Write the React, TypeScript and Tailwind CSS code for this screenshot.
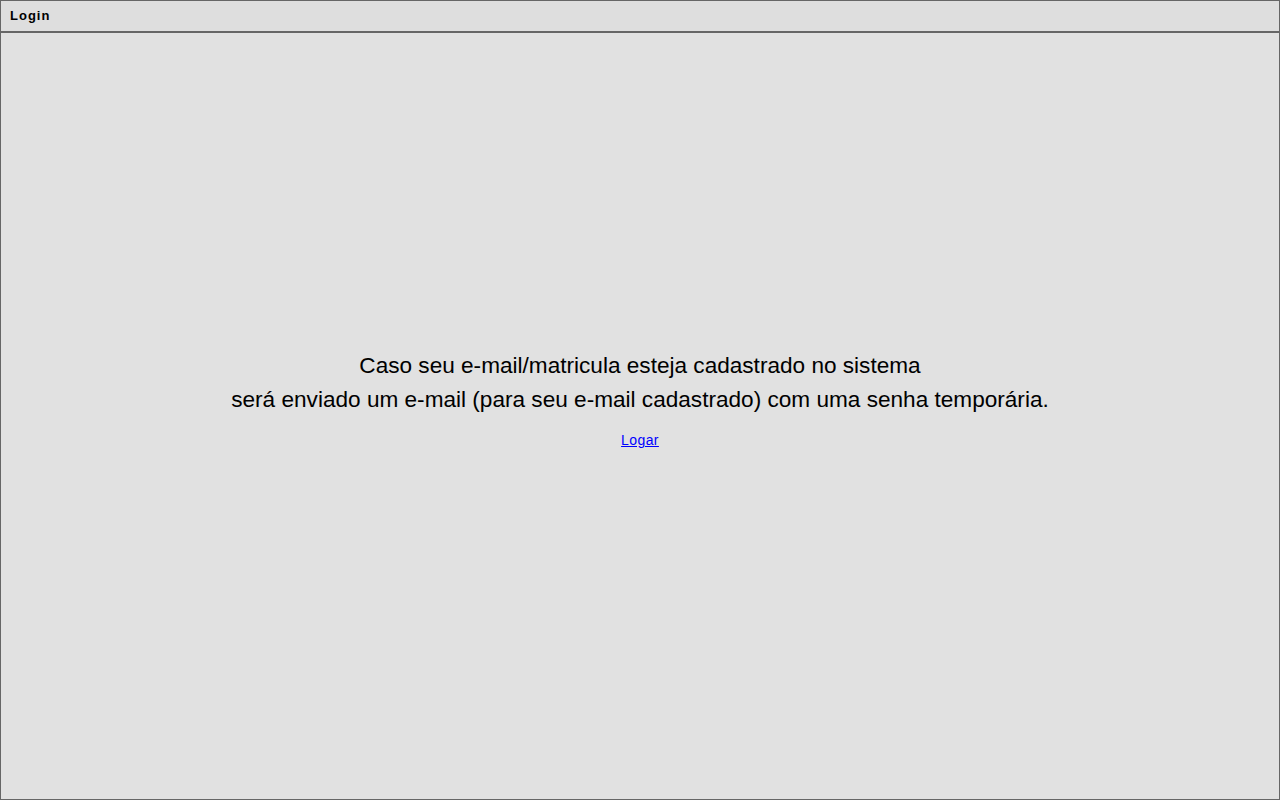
import React from 'react';

const App = () => {
  return (
    <div className="w-[1280px] h-[800px] border border-[#666666] bg-[#e1e1e1] flex flex-col font-['Liberation_Sans',Arial,sans-serif]">
      {/* Title bar */}
      <div className="h-[32px] shrink-0 bg-[#dedede] border-b-2 border-[#666666] flex items-center px-[9px]">
        <span className="text-[13px] font-bold text-black tracking-[1px]">Login</span>
      </div>
      {/* Message */}
      <div className="flex-1 flex flex-col items-center pt-[316px] text-black">
        <p className="text-[22.6px] leading-[34px] text-center">
          Caso seu e-mail/matricula esteja cadastrado no sistema
          <br />
          será enviado um e-mail (para seu e-mail cadastrado) com uma senha temporária.
        </p>
        <a href="#" className="mt-[13px] text-[14px] tracking-[0.4px] text-[#0000ff] underline">
          Logar
        </a>
      </div>
    </div>
  );
};

export default App;
